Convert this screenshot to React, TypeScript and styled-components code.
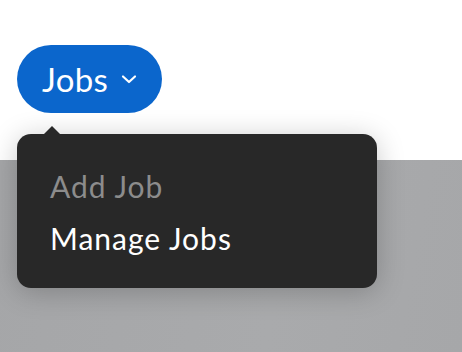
import React from "react";
import styled, { createGlobalStyle } from "styled-components";

const Global = createGlobalStyle`
  html, body { margin: 0; padding: 0; background: #ffffff; }
  body { font-family: Lato, "Noto Sans", sans-serif; overflow: hidden; }
  * { box-sizing: border-box; }
`;

const Page = styled.div`
  width: 462px;
  height: 352px;
  display: flex;
  flex-direction: column;
  position: relative;
`;

const Header = styled.header`
  height: 160px;
  background: #ffffff;
  padding: 45px 0 0 17px;
  position: relative;
`;

const Content = styled.main`
  flex: 1;
  background: linear-gradient(100deg, #a5a6a8 0%, #a9aaac 60%, #a6a7a9 100%);
`;

const MenuWrap = styled.div`
  position: relative;
  display: inline-block;
`;

const JobsButton = styled.button`
  display: flex;
  align-items: center;
  gap: 13px;
  height: 68px;
  width: 145px;
  padding: 0 0 0 25px;
  border: none;
  border-radius: 34px;
  background: #0b66cc;
  color: #ffffff;
  font-family: Lato, "Noto Sans", sans-serif;
  font-size: 33px;
  font-weight: 400;
  letter-spacing: 0.3px;
  cursor: pointer;
`;

const Dropdown = styled.div`
  position: absolute;
  left: 0;
  top: 89px;
  width: 360px;
  height: 154px;
  background: #282828;
  border-radius: 14px;
  box-shadow: 0 4px 28px rgba(0, 0, 0, 0.22);
  padding: 36px 0 0 33px;
  display: flex;
  flex-direction: column;
  gap: 19px;
  z-index: 2;

  &::before {
    content: "";
    position: absolute;
    left: 27px;
    top: -8px;
    border-left: 8px solid transparent;
    border-right: 8px solid transparent;
    border-bottom: 8px solid #282828;
  }
`;

const Item = styled.div<{ $muted?: boolean }>`
  font-family: Lato, "Noto Sans", sans-serif;
  font-size: 30px;
  line-height: 33px;
  letter-spacing: 1px;
  color: ${(p) => (p.$muted ? "#8c8c8c" : "#ffffff")};
`;

const Chevron = () => (
  <svg width="16" height="10" viewBox="0 0 16 10" fill="none">
    <path d="M2 2.5l6 5.5 6-5.5" stroke="#ffffff" strokeWidth="2.2" strokeLinecap="round" strokeLinejoin="round" />
  </svg>
);

export default function App() {
  return (
    <>
      <Global />
      <Page>
        <Header>
          <MenuWrap>
            <JobsButton>
              Jobs
              <Chevron />
            </JobsButton>
            <Dropdown>
              <Item $muted>Add Job</Item>
              <Item>Manage Jobs</Item>
            </Dropdown>
          </MenuWrap>
        </Header>
        <Content />
      </Page>
    </>
  );
}
